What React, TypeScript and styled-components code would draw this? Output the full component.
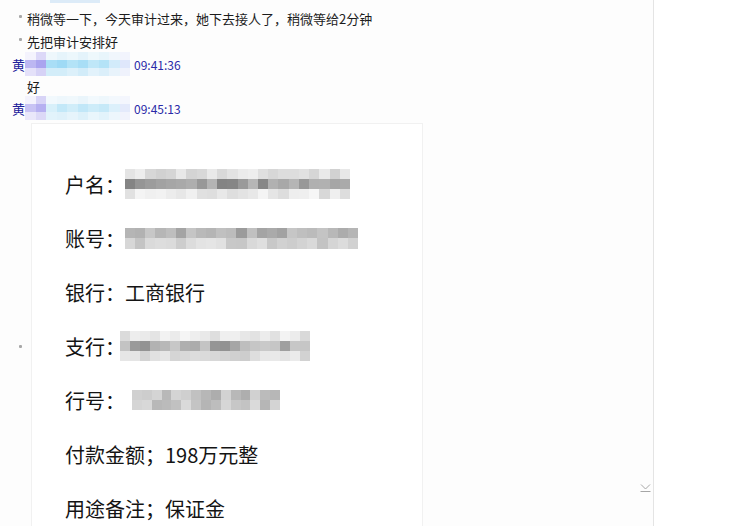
import React from "react";
import styled, { createGlobalStyle } from "styled-components";

const Global = createGlobalStyle`
  html, body { margin: 0; padding: 0; background: #ffffff; }
  body { font-family: "Noto Sans CJK SC", "Noto Sans", sans-serif; }
`;

const Page = styled.div`
  display: flex;
  width: 731px;
  height: 526px;
  overflow: hidden;
  background: #ffffff;
`;

const ChatColumn = styled.div`
  position: relative;
  width: 653px;
  flex: none;
  border-right: 1px solid #e4e4e4;
  background: #fdfdfd;
  display: flex;
  flex-direction: column;
  overflow: hidden;
  & > * {
    flex-shrink: 0;
  }
`;

const SideArea = styled.div`
  flex: 1;
  background: #ffffff;
`;

const TopStripe = styled.div`
  margin-left: 50px;
  width: 50px;
  height: 3px;
  background: #dcebf8;
  margin-bottom: 3px;
`;

const MsgRow = styled.div<{ $h: number }>`
  display: flex;
  align-items: center;
  height: ${(p) => p.$h}px;
  font-size: 13px;
  color: #1c1c1c;
  white-space: nowrap;
`;

const Gutter = styled.div`
  width: 27px;
  flex: none;
  align-self: stretch;
  position: relative;
`;

const Dot = styled.span<{ $top: string }>`
  position: absolute;
  left: 19px;
  top: ${(p) => p.$top};
  width: 3px;
  height: 3px;
  border-radius: 1px;
  background: #a8a8a8;
`;

const NameRow = styled.div`
  display: flex;
  align-items: center;
  height: 22px;
  padding-left: 12px;
  font-size: 13px;
  color: #20209a;
  white-space: nowrap;
`;

const TimeText = styled.span`
  margin-left: 4px;
  font-size: 12px;
  color: #2a2aa8;
`;

const MosaicGrid = styled.div<{ $cols: number; $rows: number; $w: number; $h: number; $mx: number }>`
  display: grid;
  grid-template-columns: repeat(${(p) => p.$cols}, 1fr);
  grid-template-rows: repeat(${(p) => p.$rows}, 1fr);
  width: ${(p) => p.$w}px;
  height: ${(p) => p.$h}px;
  margin-left: ${(p) => p.$mx}px;
  flex: none;
`;

const NameGrid = styled(MosaicGrid)`
  margin-top: -1px;
  margin-bottom: -1px;
`;

const Cell = styled.div``;

const ImageRow = styled.div`
  display: flex;
  align-items: center;
  margin-top: 4px;
`;

const Card = styled.div`
  margin-left: 4px;
  width: 392px;
  height: 446px;
  flex: none;
  background: #ffffff;
  border: 1px solid #f1f1f1;
  box-sizing: border-box;
  padding: 33px 0 0 33px;
  display: flex;
  flex-direction: column;
`;

const CardRow = styled.div`
  display: flex;
  align-items: center;
  height: 54px;
  flex: none;
  font-size: 20px;
  color: #141414;
  white-space: nowrap;
`;

const ScrollDown = styled.div`
  position: absolute;
  right: 2px;
  bottom: 34px;
  width: 11px;
  height: 8px;
  line-height: 0;
`;

function rng(seed: number) {
  let s = seed;
  return () => {
    s = (s * 9301 + 49297) % 233280;
    return s / 233280;
  };
}

type MosaicProps = {
  cols: number;
  rows: number;
  w: number;
  h: number;
  mx?: number;
  seed: number;
  ranges: [number, number][];
};

function GrayMosaic({ cols, rows, w, h, mx = 0, seed, ranges }: MosaicProps) {
  const r = rng(seed);
  const cells: string[] = [];
  for (let y = 0; y < rows; y++) {
    const [lo, hi] = ranges[y % ranges.length];
    for (let x = 0; x < cols; x++) {
      const v = Math.round(lo + (hi - lo) * r());
      cells.push(`rgb(${v},${v},${v})`);
    }
  }
  return (
    <MosaicGrid $cols={cols} $rows={rows} $w={w} $h={h} $mx={mx}>
      {cells.map((c, i) => (
        <Cell key={i} style={{ background: c }} />
      ))}
    </MosaicGrid>
  );
}

const nameA = [
  ["#f4f3fd", "#dcd8f8", "#eef7fc", "#e6f4fb", "#ecf7fc", "#e4f3fb", "#eef8fc", "#e8f5fb", "#f0f6fc", "#f2f4fd"],
  ["#bcb7f2", "#aaa4ef", "#a9def6", "#9fdaf5", "#b3e3f7", "#a8def6", "#bfe7f8", "#b4e3f7", "#d2ebfa", "#dfe7fb"],
  ["#e4e1f9", "#d6d2f6", "#d3edf9", "#d3edf9", "#dcf0fa", "#d2ecf9", "#e2f2fb", "#dbeffa", "#e8f3fb", "#eff2fc"],
];
const nameB = [
  ["#f4f3fd", "#d8d4f7", "#f2f9fd", "#eef7fc", "#f0f8fc", "#eaf5fb", "#f2f9fd", "#eef7fc", "#f3f8fd", "#f4f6fd"],
  ["#c8c3f4", "#b6b0f1", "#d8f0fa", "#c3e8f8", "#d0edf9", "#c1e7f8", "#cdecf9", "#c6e9f8", "#dcf0fb", "#e4eafb"],
  ["#e9e7fa", "#dcd9f7", "#e2f3fb", "#dff1fa", "#e6f4fb", "#ddf1fa", "#e9f6fc", "#e2f3fb", "#edf6fc", "#f1f3fc"],
];

function NameMosaic({ grid }: { grid: string[][] }) {
  return (
    <NameGrid $cols={10} $rows={3} $w={105} $h={24} $mx={0}>
      {grid.flat().map((c, i) => (
        <Cell key={i} style={{ background: c }} />
      ))}
    </NameGrid>
  );
}

export default function App() {
  return (
    <>
      <Global />
      <Page>
        <ChatColumn>
          <TopStripe />
          <MsgRow $h={24}>
            <Gutter>
              <Dot $top="9px" />
            </Gutter>
            稍微等一下，今天审计过来，她下去接人了，稍微等给2分钟
          </MsgRow>
          <MsgRow $h={23}>
            <Gutter>
              <Dot $top="8px" />
            </Gutter>
            先把审计安排好
          </MsgRow>
          <NameRow>
            黄
            <NameMosaic grid={nameA} />
            <TimeText>09:41:36</TimeText>
          </NameRow>
          <MsgRow $h={22}>
            <Gutter />
            好
          </MsgRow>
          <NameRow>
            黄
            <NameMosaic grid={nameB} />
            <TimeText>09:45:13</TimeText>
          </NameRow>
          <ImageRow>
            <Gutter>
              <Dot $top="calc(50% - 1px)" />
            </Gutter>
            <Card>
              <CardRow>
                户名：
                <GrayMosaic cols={22} rows={3} w={225} h={31} seed={11} ranges={[[205, 240], [130, 190], [215, 248]]} />
              </CardRow>
              <CardRow>
                账号：
                <GrayMosaic cols={23} rows={2} w={233} h={21} seed={37} ranges={[[140, 200], [195, 230]]} />
              </CardRow>
              <CardRow>银行：工商银行</CardRow>
              <CardRow>
                支行：
                <GrayMosaic cols={19} rows={3} w={190} h={31} mx={-5} seed={73} ranges={[[215, 245], [140, 205], [205, 240]]} />
              </CardRow>
              <CardRow>
                行号：
                <GrayMosaic cols={15} rows={2} w={148} h={20} mx={7} seed={91} ranges={[[170, 215], [180, 220]]} />
              </CardRow>
              <CardRow>付款金额；198万元整</CardRow>
              <CardRow>用途备注；保证金</CardRow>
            </Card>
          </ImageRow>
          <ScrollDown>
            <svg width="11" height="8" viewBox="0 0 11 8">
              <path d="M1 0.5 L5.5 5 L10 0.5" fill="none" stroke="#a6a6a6" strokeWidth="1" />
              <path d="M0.5 7.5 H10.5" fill="none" stroke="#a6a6a6" strokeWidth="1" />
            </svg>
          </ScrollDown>
        </ChatColumn>
        <SideArea />
      </Page>
    </>
  );
}
